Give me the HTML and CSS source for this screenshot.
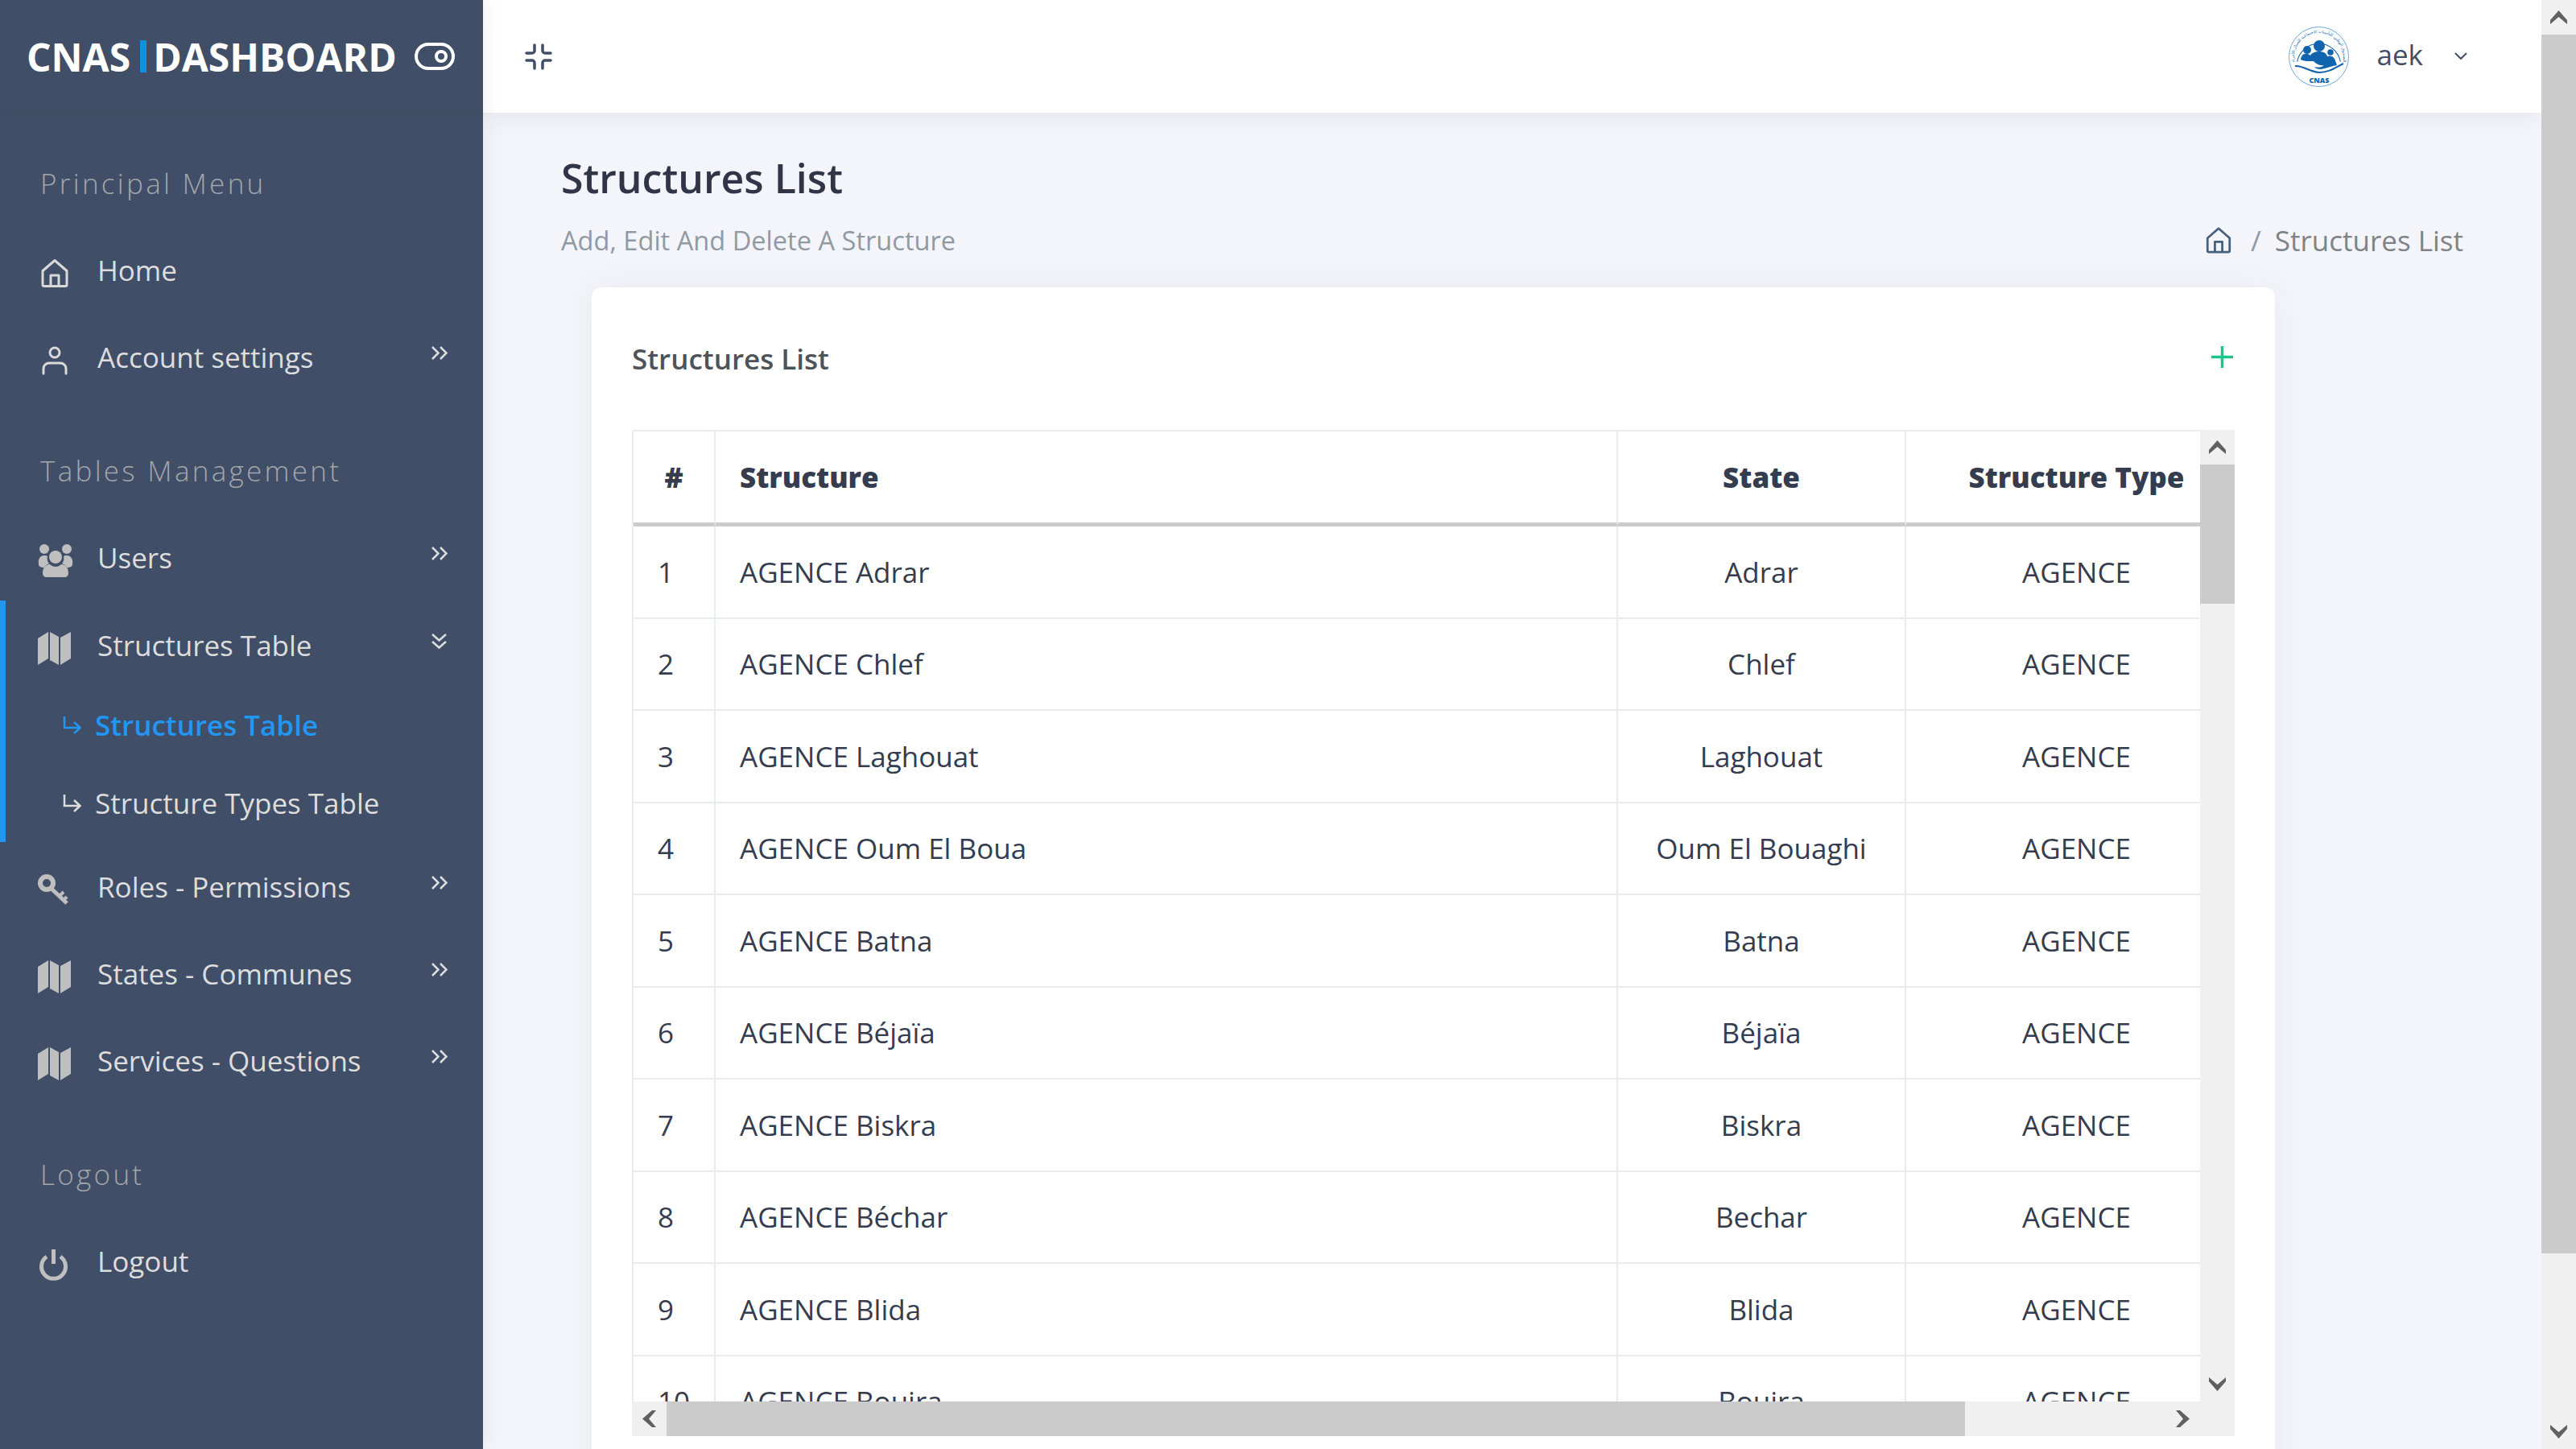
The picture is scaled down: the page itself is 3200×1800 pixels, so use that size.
FILE: index.html
```html
<!DOCTYPE html>
<html lang="en">
<head>
    <meta charset="UTF-8">
    <meta name="viewport" content="width=device-width, initial-scale=1.0">
    <title>Structures List</title>
    <link rel="stylesheet" href="styles.css">
</head>
<body>

<svg class="sprite" xmlns="http://www.w3.org/2000/svg">
    <symbol id="i-home" viewBox="0 0 34 36">
        <path d="M2 15 17 2l15 13v17a2 2 0 0 1-2 2H4a2 2 0 0 1-2-2Z M12 34V20h10v14" fill="none" stroke="currentColor" stroke-width="3" stroke-linejoin="round"/>
    </symbol>
    <symbol id="i-nav-home" viewBox="0 0 44 41">
        <path d="M6 17.500 21 4.500l15 13v17a2 2 0 0 1-2 2H8a2 2 0 0 1-2-2Z M16 36.500V23h10v13.500" fill="none" stroke="currentColor" stroke-width="3" stroke-linejoin="round"/>
    </symbol>
    <symbol id="i-user" viewBox="0 0 44 41">
        <circle cx="21" cy="11" r="6" fill="none" stroke="currentColor" stroke-width="3"/>
        <path d="M7 37v-6a7 7 0 0 1 7-7h14a7 7 0 0 1 7 7v6" fill="none" stroke="currentColor" stroke-width="3" stroke-linecap="round"/>
    </symbol>
    <symbol id="i-users" viewBox="0 0 44 41">
        <circle cx="8" cy="6" r="6"/><circle cx="36" cy="6" r="6"/>
        <path d="M1 25c-1-7 2-11 7-11 2 0 3 .5 4 1-1 3 0 7 2 9-3 1-5 3-6 5-4 0-7-1-7-4Z"/>
        <path d="M43 25c1-7-2-11-7-11-2 0-3 .5-4 1 1 3 0 7-2 9 3 1 5 3 6 5 4 0 7-1 7-4Z"/>
        <circle cx="22" cy="16" r="8"/>
        <path d="M6 36c0-7 4-11 9-11 2 2 4 3 7 3s5-1 7-3c5 0 9 4 9 11 0 3-2 5-5 5H11c-3 0-5-2-5-5Z"/>
    </symbol>
    <symbol id="i-map" viewBox="0 0 44 41">
        <path d="M0 8 13 0v33L0 41Z M15 0l11 6v35l-11-6Z M28 7l13-7v33l-13 8Z"/>
    </symbol>
    <symbol id="i-key" viewBox="0 0 44 41">
        <circle cx="11" cy="12" r="8" fill="none" stroke="currentColor" stroke-width="6"/>
        <path d="M17 19l19 18" fill="none" stroke="currentColor" stroke-width="5"/>
        <path d="M27 28l5-5M32 33l4-4" fill="none" stroke="currentColor" stroke-width="4"/>
    </symbol>
    <symbol id="i-power" viewBox="0 0 44 41">
        <path d="M11 11a15 15 0 1 0 17 0" fill="none" stroke="currentColor" stroke-width="5"/>
        <path d="M19.500 2v18" fill="none" stroke="currentColor" stroke-width="5"/>
    </symbol>
    <symbol id="i-chevrons-right" viewBox="0 0 21 19">
        <path d="M2 2l7.500 7.500L2 17M12 2l7.500 7.500L12 17" fill="none" stroke="currentColor" stroke-width="2.500"/>
    </symbol>
    <symbol id="i-chevrons-down" viewBox="0 0 21 21">
        <path d="M2 2l8.500 7.500L19 2M2 11l8.500 7.500L19 11" fill="none" stroke="currentColor" stroke-width="2.500"/>
    </symbol>
    <symbol id="i-sub" viewBox="0 0 24 22">
        <path d="M2 0v14h19M14 7l7.500 7-7.500 7" fill="none" stroke="currentColor" stroke-width="2.500"/>
    </symbol>
    <symbol id="i-bar-up" viewBox="0 0 21 17"><path d="M0 17v-5L10.500 0 21 12v5l-10.500-9z"/></symbol>
    <symbol id="i-bar-down" viewBox="0 0 21 17"><path d="M0 0v5l10.500 12L21 5V0l-10.500 9z"/></symbol>
    <symbol id="i-bar-left" viewBox="0 0 17 21"><path d="M17 0h-5L0 10.500 12 21h5L8 10.500z"/></symbol>
    <symbol id="i-bar-right" viewBox="0 0 17 21"><path d="M0 0h5l12 10.500L5 21H0l9-10.500z"/></symbol>
</svg>

<div class="app">

    <aside class="sidebar">
        <div class="brand">
            <span class="brand-name">CNAS<i class="brand-bar"></i>DASHBOARD</span>
            <svg class="brand-toggle" viewBox="0 0 50 34">
                <rect x="2" y="2" width="46" height="30" rx="15" fill="none" stroke="#fff" stroke-width="4"/>
                <circle cx="33" cy="17" r="6" fill="none" stroke="#fff" stroke-width="4"/>
            </svg>
        </div>

        <div class="nav-label">Principal Menu</div>
        <a class="nav-item"><svg class="nav-icon nav-icon-line"><use href="#i-nav-home"/></svg>Home</a>
        <a class="nav-item"><svg class="nav-icon nav-icon-line"><use href="#i-user"/></svg>Account settings<svg class="nav-more"><use href="#i-chevrons-right"/></svg></a>

        <div class="nav-label">Tables Management</div>
        <a class="nav-item"><svg class="nav-icon"><use href="#i-users"/></svg>Users<svg class="nav-more"><use href="#i-chevrons-right"/></svg></a>

        <div class="nav-group">
            <a class="nav-item nav-item-open"><svg class="nav-icon"><use href="#i-map"/></svg>Structures Table<svg class="nav-more"><use href="#i-chevrons-down"/></svg></a>
            <a class="nav-sub nav-sub-active"><svg class="nav-sub-icon"><use href="#i-sub"/></svg>Structures Table</a>
            <a class="nav-sub"><svg class="nav-sub-icon"><use href="#i-sub"/></svg>Structure Types Table</a>
        </div>

        <a class="nav-item nav-item-after"><svg class="nav-icon"><use href="#i-key"/></svg>Roles - Permissions<svg class="nav-more"><use href="#i-chevrons-right"/></svg></a>
        <a class="nav-item"><svg class="nav-icon"><use href="#i-map"/></svg>States - Communes<svg class="nav-more"><use href="#i-chevrons-right"/></svg></a>
        <a class="nav-item"><svg class="nav-icon"><use href="#i-map"/></svg>Services - Questions<svg class="nav-more"><use href="#i-chevrons-right"/></svg></a>

        <div class="nav-label">Logout</div>
        <a class="nav-item"><svg class="nav-icon"><use href="#i-power"/></svg>Logout</a>
    </aside>

    <div class="page">
        <div class="page-main">
            <header class="topbar">
                <svg class="topbar-min" viewBox="0 0 34 33">
                    <path d="M12 2v7a3 3 0 0 1-3 3H2M32 12h-7a3 3 0 0 1-3-3V2M22 31v-7a3 3 0 0 1 3-3h7M2 21h7a3 3 0 0 1 3 3v7" fill="none" stroke="#404e67" stroke-width="3.500" stroke-linecap="round"/>
                </svg>
                <div class="user">
                    <svg class="user-logo" viewBox="0 0 75 75">
                        <defs>
                            <path id="logo-ring" d="M8 46A30.500 30.500 0 1 1 67 46"/>
                        </defs>
                        <circle cx="37.500" cy="37.500" r="37" fill="#fff" stroke="#6aa7d8" stroke-width="1"/>
                        <text class="logo-ring-text"><textPath href="#logo-ring" startOffset="50%" text-anchor="middle">الصندوق الوطني للتأمينات الاجتماعية للعمال الأجراء</textPath></text>
                        <path d="M7 45A31 31 0 0 1 68 45" fill="none" stroke="#0f64ad" stroke-width="1.200" transform="translate(4.500 4) scale(.88)"/>
                        <circle cx="38" cy="24" r="7" fill="#0f64ad"/>
                        <circle cx="23" cy="29" r="5" fill="#0f64ad"/>
                        <circle cx="52" cy="32" r="3.800" fill="#0f64ad"/>
                        <path d="M15 41c1-6 4-8 8-7 2 0 3 1 4 2 1-3 6-5 11-5 5 0 9 2 10 6 2-1 7-1 9 3 1 2 2 5 3 8-6 1-14 4-20 5-4 0-7-1-8-3 4 1 9 1 12-2-6 1-10-2-13-5l-4 0c-4 0-8 0-12-2Z" fill="#0f64ad"/>
                        <path d="M8 49c10-1 17 7 30 8 12 0 20-6 30-11" fill="none" stroke="#0f64ad" stroke-width="2"/>
                        <text class="logo-name" x="38" y="70" text-anchor="middle">CNAS</text>
                    </svg>
                    <span class="user-name">aek</span>
                    <svg class="user-caret" viewBox="0 0 16 9"><path d="M1 1l7 7 7-7" fill="none" stroke="#404e67" stroke-width="2"/></svg>
                </div>
            </header>

            <main class="content">
                <div class="page-head">
                    <h1 class="page-title">Structures List</h1>
                    <div class="page-sub">
                        <span>Add, Edit And Delete A Structure</span>
                        <div class="crumbs">
                            <svg class="crumb-home"><use href="#i-home"/></svg>
                            <span class="crumb-sep">/</span>
                            <span>Structures List</span>
                        </div>
                    </div>
                </div>

                <section class="card">
                    <div class="card-head">
                        <h2 class="card-title">Structures List</h2>
                        <svg class="card-add" viewBox="0 0 27 27"><path d="M13.500 0v27M0 13.500h27" fill="none" stroke="#19c58a" stroke-width="3.500"/></svg>
                    </div>

                    <div class="table-box">
                        <div class="table-view">
                            <table class="data">
                                <colgroup>
                                    <col class="col-num"><col class="col-name"><col class="col-state"><col class="col-type"><col class="col-rest">
                                </colgroup>
                                <thead>
                                    <tr><th>#</th><th class="left">Structure</th><th>State</th><th>Structure Type</th><th></th></tr>
                                </thead>
                                <tbody>
                                    <tr><td class="left">1</td><td class="left">AGENCE Adrar</td><td>Adrar</td><td>AGENCE</td><td></td></tr>
                                    <tr><td class="left">2</td><td class="left">AGENCE Chlef</td><td>Chlef</td><td>AGENCE</td><td></td></tr>
                                    <tr><td class="left">3</td><td class="left">AGENCE Laghouat</td><td>Laghouat</td><td>AGENCE</td><td></td></tr>
                                    <tr><td class="left">4</td><td class="left">AGENCE Oum El Boua</td><td>Oum El Bouaghi</td><td>AGENCE</td><td></td></tr>
                                    <tr><td class="left">5</td><td class="left">AGENCE Batna</td><td>Batna</td><td>AGENCE</td><td></td></tr>
                                    <tr><td class="left">6</td><td class="left">AGENCE Béjaïa</td><td>Béjaïa</td><td>AGENCE</td><td></td></tr>
                                    <tr><td class="left">7</td><td class="left">AGENCE Biskra</td><td>Biskra</td><td>AGENCE</td><td></td></tr>
                                    <tr><td class="left">8</td><td class="left">AGENCE Béchar</td><td>Bechar</td><td>AGENCE</td><td></td></tr>
                                    <tr><td class="left">9</td><td class="left">AGENCE Blida</td><td>Blida</td><td>AGENCE</td><td></td></tr>
                                    <tr><td class="left">10</td><td class="left">AGENCE Bouira</td><td>Bouira</td><td>AGENCE</td><td></td></tr>
                                </tbody>
                            </table>
                        </div>

                        <div class="bar bar-y">
                            <span class="bar-btn"><svg class="arrow-y"><use href="#i-bar-up"/></svg></span>
                            <span class="bar-thumb thumb-table-y"></span>
                            <span class="bar-btn bar-end"><svg class="arrow-y"><use href="#i-bar-down"/></svg></span>
                        </div>
                        <div class="bar bar-x">
                            <span class="bar-btn"><svg class="arrow-x"><use href="#i-bar-left"/></svg></span>
                            <span class="bar-thumb thumb-table-x"></span>
                            <span class="bar-btn bar-end"><svg class="arrow-x"><use href="#i-bar-right"/></svg></span>
                        </div>
                        <div class="bar-corner"></div>
                    </div>
                </section>
            </main>
        </div>

        <div class="bar bar-y bar-page">
            <span class="bar-btn"><svg class="arrow-y"><use href="#i-bar-up"/></svg></span>
            <span class="bar-thumb thumb-page"></span>
            <span class="bar-btn bar-end"><svg class="arrow-y"><use href="#i-bar-down"/></svg></span>
        </div>
    </div>

</div>

</body>
</html>
```

FILE: styles.css
```css
:root {
    --sidebar: #404e67;
    --fond: #f4f5fa;
    --bleu: #2196f3;
    --texte: #353c4e;
    --ligne: #e9ecef;
    --piste: #f0f0f0;
    --pouce: #cbcbcb;
    --nav-texte: #dddddd;
    --icone: #bfbfbf;
}

* {
    box-sizing: border-box;
}

html,
body {
    height: 100%;
}

body {
    margin: 0;
    overflow: hidden;
    font-family: "Open Sans", sans-serif;
    font-size: 35px;
    color: var(--texte);
    background-color: var(--fond);
}

.sprite {
    display: none;
}

.app {
    display: flex;
    height: 100vh;
}

/* sidebar */

.sidebar {
    flex: 0 0 600px;
    position: relative;
    z-index: 3;
    background-color: var(--sidebar);
    box-shadow: 0 0 30px rgba(0, 0, 0, 0.07);
}

.brand {
    display: flex;
    align-items: center;
    height: 140px;
    padding-left: 33px;
    box-shadow: 0 2px 3px rgba(0, 0, 0, 0.03);
}

.brand-name {
    display: flex;
    align-items: center;
    width: 482px;
    font-size: 48px;
    font-weight: 700;
    color: #fff;
}

.brand-bar {
    width: 8px;
    height: 40px;
    margin: 0 8px 0 12px;
    background-color: #0f8fdc;
}

.brand-toggle {
    width: 50px;
    height: 34px;
}

.nav-label {
    height: 141px;
    padding: 64px 0 0 50px;
    font-size: 35px;
    line-height: 48px;
    letter-spacing: 3.300px;
    font-weight: 300;
    color: #a3a6ab;
}

.nav-item {
    display: flex;
    align-items: center;
    height: 108px;
    padding: 0 44px 0 47px;
    color: var(--nav-texte);
}

.nav-icon {
    flex: 0 0 44px;
    width: 44px;
    height: 41px;
    margin-top: 8px;
    margin-right: 30px;
    fill: var(--icone);
    color: var(--icone);
}

.nav-icon-line {
    color: #d9d9d9;
    fill: #d9d9d9;
}

.nav-more {
    width: 21px;
    height: 21px;
    margin-left: auto;
    margin-bottom: 10px;
    color: #dddddd;
}

.nav-group {
    border-left: 7px solid var(--bleu);
}

.nav-item-open {
    height: 106px;
    padding-top: 4px;
    padding-left: 40px;
}

.nav-sub {
    display: flex;
    align-items: center;
    height: 97px;
    padding-left: 71px;
    color: var(--nav-texte);
}

.nav-sub-active {
    color: var(--bleu);
    font-weight: 600;
}

.nav-sub-icon {
    width: 24px;
    height: 22px;
    margin-right: 16px;
}

.nav-item-after {
    margin-top: 1px;
}

/* page */

.page {
    flex: 1;
    min-width: 0;
    display: flex;
}

.page-main {
    flex: 1;
    min-width: 0;
    overflow: hidden;
}

.topbar {
    position: relative;
    z-index: 2;
    display: flex;
    align-items: center;
    justify-content: space-between;
    height: 140px;
    padding: 0 92px 0 52px;
    background-color: #fff;
    box-shadow: 0 4px 30px rgba(0, 0, 0, 0.07);
}

.topbar-min {
    width: 34px;
    height: 33px;
}

.user {
    display: flex;
    align-items: center;
}

.user-logo {
    width: 75px;
    height: 75px;
    margin-right: 35px;
}

.logo-ring-text {
    font-family: "DejaVu Sans", sans-serif;
    font-size: 5px;
    fill: #0f64ad;
}

.logo-name {
    font-family: "Open Sans", sans-serif;
    font-size: 9px;
    font-weight: 800;
    fill: #0f64ad;
}

.user-name {
    margin: 0 39px 6px 0;
    color: #404e67;
}

.user-caret {
    width: 16px;
    height: 9px;
    margin-bottom: 2px;
}

.content {
    padding: 0 97px;
}

.page-head {
    padding-top: 51px;
}

.page-title {
    margin: 0;
    font-size: 50px;
    line-height: 60px;
    font-weight: 600;
    color: #303548;
}

.page-sub {
    display: flex;
    align-items: center;
    justify-content: space-between;
    margin-top: 24px;
    font-size: 32.600px;
    color: #919aa3;
}

.crumbs {
    display: flex;
    align-items: center;
    font-size: 35px;
    color: #7f8388;
}

.crumb-home {
    width: 32px;
    height: 33px;
    color: #44607f;
}

.crumb-sep {
    margin: 0 17px 0 24px;
    color: #919aa3;
}

/* card */

.card {
    width: 2091px;
    margin: 35px 0 0 38px;
    padding: 50px 50px 60px;
    border-radius: 12px;
    background-color: #fff;
    box-shadow: 0 0 40px rgba(43, 61, 81, 0.06);
}

.card-head {
    display: flex;
    align-items: center;
    justify-content: space-between;
    height: 80px;
    margin-bottom: 47px;
}

.card-title {
    margin: 0 0 4px;
    font-size: 35px;
    font-weight: 600;
    color: #4e5359;
}

.card-add {
    width: 27px;
    height: 27px;
    margin: 0 2px 8px 0;
}

/* table with its scrollbars */

.table-box {
    display: grid;
    grid-template-columns: 1948px 43px;
    grid-template-rows: 1207px 43px;
}

.table-view {
    overflow: hidden;
}

.data {
    width: 2248px;
    table-layout: fixed;
    border-collapse: separate;
    border-spacing: 0;
    border-top: 2px solid var(--ligne);
    border-left: 2px solid var(--ligne);
}

.col-num { width: 102px; }
.col-name { width: 1121px; }
.col-state { width: 358px; }
.col-type { width: 425px; }

.data th,
.data td {
    padding: 0 30px;
    text-align: center;
    border-right: 2px solid var(--ligne);
    border-bottom: 2px solid var(--ligne);
}

.data th {
    height: 118px;
    font-weight: 800;
    border-bottom: 5px solid var(--pouce);
}

.data td {
    height: 114.500px;
}

.data .left {
    text-align: left;
}

.bar {
    display: flex;
    background-color: var(--piste);
}

.bar-y {
    flex-direction: column;
}

.bar-page {
    flex: 0 0 43px;
}

.bar-btn {
    flex: 0 0 43px;
    display: flex;
    align-items: center;
    justify-content: center;
    fill: #606060;
}

.bar-end {
    margin-top: auto;
}

.bar-x .bar-end {
    margin-top: 0;
    margin-left: auto;
}

.bar-thumb {
    background-color: var(--pouce);
}

.thumb-table-y {
    height: 173px;
}

.thumb-table-x {
    width: 1613px;
}

.thumb-page {
    height: 1514px;
}

.bar-corner {
    background-color: var(--piste);
}

.arrow-y {
    width: 21px;
    height: 17px;
}

.arrow-x {
    width: 17px;
    height: 21px;
}
```
